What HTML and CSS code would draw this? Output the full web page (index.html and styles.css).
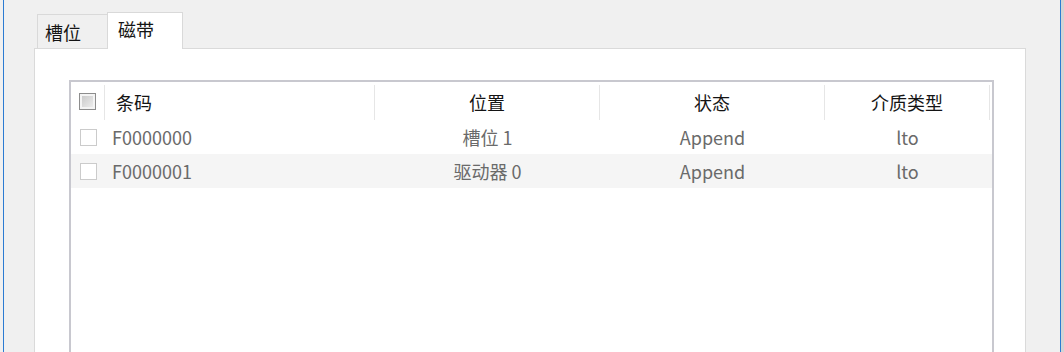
FILE: index.html
```html
<!DOCTYPE html>
<html lang="zh">
<head>
<meta charset="utf-8">
<link rel="stylesheet" href="styles.css">
</head>
<body>
<div class="window">
  <div class="tabs">
    <div class="tab">槽位</div>
    <div class="tab active">磁带</div>
  </div>
  <div class="panel">
    <div class="table">
      <div class="row head">
        <div class="cell chk"><span class="box box-head"></span></div>
        <div class="cell left">条码</div>
        <div class="cell">位置</div>
        <div class="cell">状态</div>
        <div class="cell">介质类型</div>
      </div>
      <div class="row">
        <div class="cell chk"><span class="box"></span></div>
        <div class="cell left">F0000000</div>
        <div class="cell">槽位 1</div>
        <div class="cell">Append</div>
        <div class="cell">lto</div>
      </div>
      <div class="row alt">
        <div class="cell chk"><span class="box"></span></div>
        <div class="cell left">F0000001</div>
        <div class="cell">驱动器 0</div>
        <div class="cell">Append</div>
        <div class="cell">lto</div>
      </div>
    </div>
  </div>
</div>
</body>
</html>
```

FILE: styles.css
```css
html, body {
  margin: 0;
  padding: 0;
  background: #f0f0f0;
  overflow: hidden;
}
body {
  width: 1064px;
  height: 352px;
  font-family: "Noto Sans CJK SC", "Noto Sans", sans-serif;
  font-size: 18px;
}
.window {
  margin-left: 3px;
  width: 1058px;
  height: 352px;
  box-sizing: border-box;
  border-left: 1px solid #2b7bd2;
  border-right: 1px solid #2b7bd2;
  box-shadow: 3px 0 0 #d4d4d4;
  background: #f0f0f0;
  display: flex;
  flex-direction: column;
  padding-top: 12px;
}
.tabs {
  display: flex;
  align-items: flex-end;
  padding-left: 33px;
  height: 36px;
}
.tab {
  box-sizing: border-box;
  height: 34px;
  width: 70px;
  border: 1px solid #d9d9d9;
  border-bottom: none;
  border-right: none;
  background: #f0f0f0;
  color: #141414;
  display: flex;
  align-items: center;
  padding-left: 7px;
  line-height: 1;
}
.tab.active {
  height: 37px;
  width: 76px;
  margin-bottom: -1px;
  background: #ffffff;
  border-right: 1px solid #d9d9d9;
  padding-left: 10px;
  padding-bottom: 4px;
  position: relative;
  z-index: 1;
}
.panel {
  margin-left: 30px;
  width: 992px;
  box-sizing: border-box;
  flex: 1;
  background: #ffffff;
  border: 1px solid #dadada;
  border-bottom: none;
  padding: 31px 31px 0 34px;
  overflow: hidden;
}
.table {
  border: 2px solid #c8c8cf;
  height: 400px;
  box-sizing: border-box;
}
.row {
  display: grid;
  grid-template-columns: 34px 270px 225px 225px 165px;
  height: 34px;
  color: #6a6a6a;
}
.row.alt {
  background: #f5f5f5;
}
.row.head {
  height: 38px;
  color: #141414;
}
.cell {
  display: flex;
  align-items: center;
  justify-content: center;
  white-space: nowrap;
  line-height: 1;
}
.cell.left {
  justify-content: flex-start;
  padding-left: 7px;
}
.head .cell {
  margin-top: 3px;
  padding-bottom: 2px;
  border-right: 1px solid #e6e6e6;
}
.head .cell.left {
  padding-left: 11px;
}
.box {
  display: block;
  width: 17px;
  height: 17px;
  box-sizing: border-box;
  border: 1px solid #cbcbcb;
  background: #ffffff;
}
.box-head {
  border: 1px solid #8d8d8d;
  box-shadow: inset 0 0 0 2px #f4f4f4;
  background: linear-gradient(135deg, #c4c4c4, #f2f2f2);
}
```
